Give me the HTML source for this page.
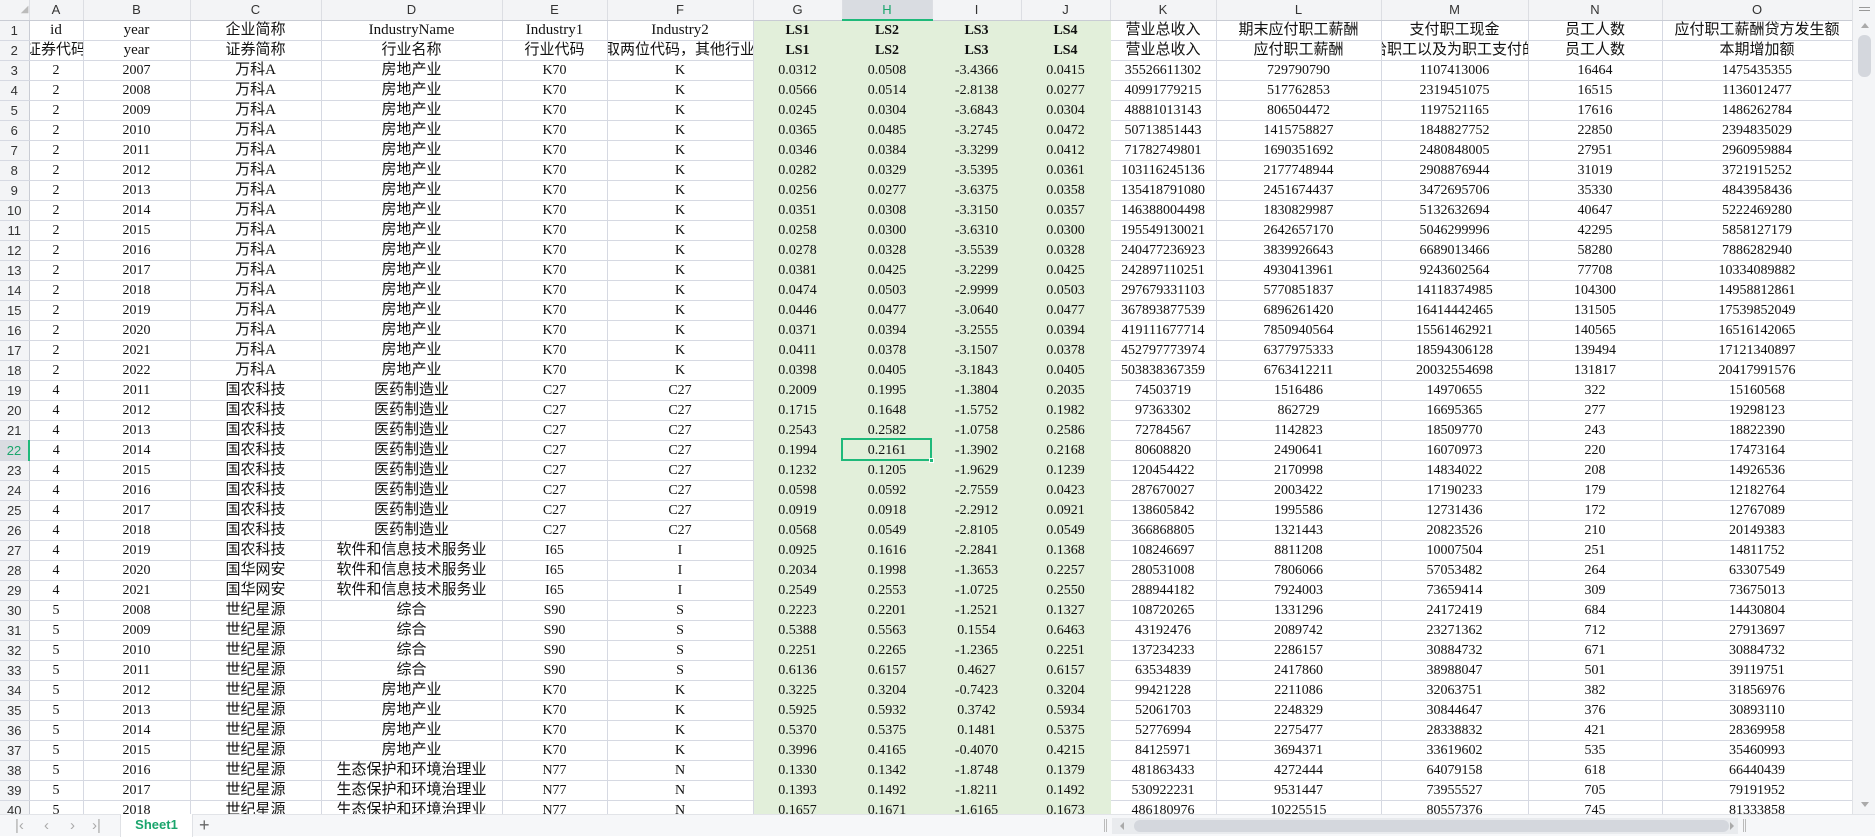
<!DOCTYPE html>
<html><head><meta charset="utf-8"><style>
*{margin:0;padding:0;box-sizing:border-box}
body{width:1875px;height:836px;overflow:hidden;background:#fff;position:relative;font-family:"Liberation Serif","Noto Sans CJK SC",serif;}
#wrap{position:absolute;left:0;top:0;width:1852px;height:814px;overflow:hidden}
table{border-collapse:collapse;table-layout:fixed;width:1852px}
td{height:20px;border-right:1px solid #d6d9e2;border-bottom:1px solid #d6d9e2;text-align:center;white-space:nowrap;overflow:hidden;font-size:14px;color:#111;padding:0;line-height:19px}
tr td:nth-child(4),tr td:nth-child(5),tr.t td{font-size:15px}
tr.h td{background:#f3f4f6;font-family:"Liberation Sans",sans-serif;font-size:13px;color:#333;border-bottom:1px solid #c9ccd4;border-right:1px solid #dcdee3}
td.r{background:#f3f4f6;font-family:"Liberation Sans",sans-serif;font-size:13px !important;color:#333;border-right:1px solid #c9ccd4}
td.g{background:#e2efda;border-right-color:#e2efda;border-bottom-color:#e2efda}
td.b{font-weight:bold;font-size:14px !important}
tr.h td.sel{background:#d9dce1;color:#1aa56c;border-bottom:2px solid #1fb97a}
td.rs{background:#d9dce1;color:#1aa56c;border-right:2px solid #1fb97a}
.c{display:flex;justify-content:center;overflow:hidden;width:100%}
#cur{position:absolute;left:841px;top:438px;width:91px;height:23px;border:2px solid #1fb97a}
#cur i{position:absolute;right:-4px;bottom:-4px;width:5px;height:5px;background:#1fb97a;border:1px solid #fff}
#bar{position:absolute;left:0;top:814px;width:1875px;height:22px;background:#f6f7f9;border-top:1px solid #e2e4e8;font-family:"Liberation Sans",sans-serif}
#vs{position:absolute;left:1852px;top:0;width:23px;height:814px;background:#f4f5f7;border-left:1px solid #e0e2e6}
.nav{position:absolute;top:2px;font-size:15px;color:#aaa}
</style></head><body>
<div id="wrap"><table>
<colgroup><col style="width:29px"><col style="width:54px"><col style="width:107px"><col style="width:131px"><col style="width:181px"><col style="width:105px"><col style="width:146px"><col style="width:89px"><col style="width:90px"><col style="width:89px"><col style="width:89px"><col style="width:106px"><col style="width:165px"><col style="width:147px"><col style="width:134px"><col style="width:190px"></colgroup>
<tr class="h"><td style="color:#bbb;font-size:10px;text-align:right">◢</td><td>A</td><td>B</td><td>C</td><td>D</td><td>E</td><td>F</td><td>G</td><td class="sel">H</td><td>I</td><td>J</td><td>K</td><td>L</td><td>M</td><td>N</td><td>O</td></tr>
<tr class="t"><td class="r">1</td><td>id</td><td>year</td><td>企业简称</td><td>IndustryName</td><td>Industry1</td><td>Industry2</td><td class="g b">LS1</td><td class="g b">LS2</td><td class="g b">LS3</td><td class="g b">LS4</td><td>营业总收入</td><td>期末应付职工薪酬</td><td>支付职工现金</td><td>员工人数</td><td>应付职工薪酬贷方发生额</td></tr>
<tr class="t"><td class="r">2</td><td><div class="c">证券代码</div></td><td>year</td><td>证券简称</td><td>行业名称</td><td>行业代码</td><td><div class="c">取两位代码，其他行业</div></td><td class="g b">LS1</td><td class="g b">LS2</td><td class="g b">LS3</td><td class="g b">LS4</td><td>营业总收入</td><td>应付职工薪酬</td><td><div class="c">支付给职工以及为职工支付的现金</div></td><td>员工人数</td><td>本期增加额</td></tr>
<tr><td class="r">3</td><td>2</td><td>2007</td><td>万科A</td><td>房地产业</td><td>K70</td><td>K</td><td class="g">0.0312</td><td class="g">0.0508</td><td class="g">-3.4366</td><td class="g">0.0415</td><td>35526611302</td><td>729790790</td><td>1107413006</td><td>16464</td><td>1475435355</td></tr>
<tr><td class="r">4</td><td>2</td><td>2008</td><td>万科A</td><td>房地产业</td><td>K70</td><td>K</td><td class="g">0.0566</td><td class="g">0.0514</td><td class="g">-2.8138</td><td class="g">0.0277</td><td>40991779215</td><td>517762853</td><td>2319451075</td><td>16515</td><td>1136012477</td></tr>
<tr><td class="r">5</td><td>2</td><td>2009</td><td>万科A</td><td>房地产业</td><td>K70</td><td>K</td><td class="g">0.0245</td><td class="g">0.0304</td><td class="g">-3.6843</td><td class="g">0.0304</td><td>48881013143</td><td>806504472</td><td>1197521165</td><td>17616</td><td>1486262784</td></tr>
<tr><td class="r">6</td><td>2</td><td>2010</td><td>万科A</td><td>房地产业</td><td>K70</td><td>K</td><td class="g">0.0365</td><td class="g">0.0485</td><td class="g">-3.2745</td><td class="g">0.0472</td><td>50713851443</td><td>1415758827</td><td>1848827752</td><td>22850</td><td>2394835029</td></tr>
<tr><td class="r">7</td><td>2</td><td>2011</td><td>万科A</td><td>房地产业</td><td>K70</td><td>K</td><td class="g">0.0346</td><td class="g">0.0384</td><td class="g">-3.3299</td><td class="g">0.0412</td><td>71782749801</td><td>1690351692</td><td>2480848005</td><td>27951</td><td>2960959884</td></tr>
<tr><td class="r">8</td><td>2</td><td>2012</td><td>万科A</td><td>房地产业</td><td>K70</td><td>K</td><td class="g">0.0282</td><td class="g">0.0329</td><td class="g">-3.5395</td><td class="g">0.0361</td><td>103116245136</td><td>2177748944</td><td>2908876944</td><td>31019</td><td>3721915252</td></tr>
<tr><td class="r">9</td><td>2</td><td>2013</td><td>万科A</td><td>房地产业</td><td>K70</td><td>K</td><td class="g">0.0256</td><td class="g">0.0277</td><td class="g">-3.6375</td><td class="g">0.0358</td><td>135418791080</td><td>2451674437</td><td>3472695706</td><td>35330</td><td>4843958436</td></tr>
<tr><td class="r">10</td><td>2</td><td>2014</td><td>万科A</td><td>房地产业</td><td>K70</td><td>K</td><td class="g">0.0351</td><td class="g">0.0308</td><td class="g">-3.3150</td><td class="g">0.0357</td><td>146388004498</td><td>1830829987</td><td>5132632694</td><td>40647</td><td>5222469280</td></tr>
<tr><td class="r">11</td><td>2</td><td>2015</td><td>万科A</td><td>房地产业</td><td>K70</td><td>K</td><td class="g">0.0258</td><td class="g">0.0300</td><td class="g">-3.6310</td><td class="g">0.0300</td><td>195549130021</td><td>2642657170</td><td>5046299996</td><td>42295</td><td>5858127179</td></tr>
<tr><td class="r">12</td><td>2</td><td>2016</td><td>万科A</td><td>房地产业</td><td>K70</td><td>K</td><td class="g">0.0278</td><td class="g">0.0328</td><td class="g">-3.5539</td><td class="g">0.0328</td><td>240477236923</td><td>3839926643</td><td>6689013466</td><td>58280</td><td>7886282940</td></tr>
<tr><td class="r">13</td><td>2</td><td>2017</td><td>万科A</td><td>房地产业</td><td>K70</td><td>K</td><td class="g">0.0381</td><td class="g">0.0425</td><td class="g">-3.2299</td><td class="g">0.0425</td><td>242897110251</td><td>4930413961</td><td>9243602564</td><td>77708</td><td>10334089882</td></tr>
<tr><td class="r">14</td><td>2</td><td>2018</td><td>万科A</td><td>房地产业</td><td>K70</td><td>K</td><td class="g">0.0474</td><td class="g">0.0503</td><td class="g">-2.9999</td><td class="g">0.0503</td><td>297679331103</td><td>5770851837</td><td>14118374985</td><td>104300</td><td>14958812861</td></tr>
<tr><td class="r">15</td><td>2</td><td>2019</td><td>万科A</td><td>房地产业</td><td>K70</td><td>K</td><td class="g">0.0446</td><td class="g">0.0477</td><td class="g">-3.0640</td><td class="g">0.0477</td><td>367893877539</td><td>6896261420</td><td>16414442465</td><td>131505</td><td>17539852049</td></tr>
<tr><td class="r">16</td><td>2</td><td>2020</td><td>万科A</td><td>房地产业</td><td>K70</td><td>K</td><td class="g">0.0371</td><td class="g">0.0394</td><td class="g">-3.2555</td><td class="g">0.0394</td><td>419111677714</td><td>7850940564</td><td>15561462921</td><td>140565</td><td>16516142065</td></tr>
<tr><td class="r">17</td><td>2</td><td>2021</td><td>万科A</td><td>房地产业</td><td>K70</td><td>K</td><td class="g">0.0411</td><td class="g">0.0378</td><td class="g">-3.1507</td><td class="g">0.0378</td><td>452797773974</td><td>6377975333</td><td>18594306128</td><td>139494</td><td>17121340897</td></tr>
<tr><td class="r">18</td><td>2</td><td>2022</td><td>万科A</td><td>房地产业</td><td>K70</td><td>K</td><td class="g">0.0398</td><td class="g">0.0405</td><td class="g">-3.1843</td><td class="g">0.0405</td><td>503838367359</td><td>6763412211</td><td>20032554698</td><td>131817</td><td>20417991576</td></tr>
<tr><td class="r">19</td><td>4</td><td>2011</td><td>国农科技</td><td>医药制造业</td><td>C27</td><td>C27</td><td class="g">0.2009</td><td class="g">0.1995</td><td class="g">-1.3804</td><td class="g">0.2035</td><td>74503719</td><td>1516486</td><td>14970655</td><td>322</td><td>15160568</td></tr>
<tr><td class="r">20</td><td>4</td><td>2012</td><td>国农科技</td><td>医药制造业</td><td>C27</td><td>C27</td><td class="g">0.1715</td><td class="g">0.1648</td><td class="g">-1.5752</td><td class="g">0.1982</td><td>97363302</td><td>862729</td><td>16695365</td><td>277</td><td>19298123</td></tr>
<tr><td class="r">21</td><td>4</td><td>2013</td><td>国农科技</td><td>医药制造业</td><td>C27</td><td>C27</td><td class="g">0.2543</td><td class="g">0.2582</td><td class="g">-1.0758</td><td class="g">0.2586</td><td>72784567</td><td>1142823</td><td>18509770</td><td>243</td><td>18822390</td></tr>
<tr><td class="r rs">22</td><td>4</td><td>2014</td><td>国农科技</td><td>医药制造业</td><td>C27</td><td>C27</td><td class="g">0.1994</td><td class="g">0.2161</td><td class="g">-1.3902</td><td class="g">0.2168</td><td>80608820</td><td>2490641</td><td>16070973</td><td>220</td><td>17473164</td></tr>
<tr><td class="r">23</td><td>4</td><td>2015</td><td>国农科技</td><td>医药制造业</td><td>C27</td><td>C27</td><td class="g">0.1232</td><td class="g">0.1205</td><td class="g">-1.9629</td><td class="g">0.1239</td><td>120454422</td><td>2170998</td><td>14834022</td><td>208</td><td>14926536</td></tr>
<tr><td class="r">24</td><td>4</td><td>2016</td><td>国农科技</td><td>医药制造业</td><td>C27</td><td>C27</td><td class="g">0.0598</td><td class="g">0.0592</td><td class="g">-2.7559</td><td class="g">0.0423</td><td>287670027</td><td>2003422</td><td>17190233</td><td>179</td><td>12182764</td></tr>
<tr><td class="r">25</td><td>4</td><td>2017</td><td>国农科技</td><td>医药制造业</td><td>C27</td><td>C27</td><td class="g">0.0919</td><td class="g">0.0918</td><td class="g">-2.2912</td><td class="g">0.0921</td><td>138605842</td><td>1995586</td><td>12731436</td><td>172</td><td>12767089</td></tr>
<tr><td class="r">26</td><td>4</td><td>2018</td><td>国农科技</td><td>医药制造业</td><td>C27</td><td>C27</td><td class="g">0.0568</td><td class="g">0.0549</td><td class="g">-2.8105</td><td class="g">0.0549</td><td>366868805</td><td>1321443</td><td>20823526</td><td>210</td><td>20149383</td></tr>
<tr><td class="r">27</td><td>4</td><td>2019</td><td>国农科技</td><td>软件和信息技术服务业</td><td>I65</td><td>I</td><td class="g">0.0925</td><td class="g">0.1616</td><td class="g">-2.2841</td><td class="g">0.1368</td><td>108246697</td><td>8811208</td><td>10007504</td><td>251</td><td>14811752</td></tr>
<tr><td class="r">28</td><td>4</td><td>2020</td><td>国华网安</td><td>软件和信息技术服务业</td><td>I65</td><td>I</td><td class="g">0.2034</td><td class="g">0.1998</td><td class="g">-1.3653</td><td class="g">0.2257</td><td>280531008</td><td>7806066</td><td>57053482</td><td>264</td><td>63307549</td></tr>
<tr><td class="r">29</td><td>4</td><td>2021</td><td>国华网安</td><td>软件和信息技术服务业</td><td>I65</td><td>I</td><td class="g">0.2549</td><td class="g">0.2553</td><td class="g">-1.0725</td><td class="g">0.2550</td><td>288944182</td><td>7924003</td><td>73659414</td><td>309</td><td>73675013</td></tr>
<tr><td class="r">30</td><td>5</td><td>2008</td><td>世纪星源</td><td>综合</td><td>S90</td><td>S</td><td class="g">0.2223</td><td class="g">0.2201</td><td class="g">-1.2521</td><td class="g">0.1327</td><td>108720265</td><td>1331296</td><td>24172419</td><td>684</td><td>14430804</td></tr>
<tr><td class="r">31</td><td>5</td><td>2009</td><td>世纪星源</td><td>综合</td><td>S90</td><td>S</td><td class="g">0.5388</td><td class="g">0.5563</td><td class="g">0.1554</td><td class="g">0.6463</td><td>43192476</td><td>2089742</td><td>23271362</td><td>712</td><td>27913697</td></tr>
<tr><td class="r">32</td><td>5</td><td>2010</td><td>世纪星源</td><td>综合</td><td>S90</td><td>S</td><td class="g">0.2251</td><td class="g">0.2265</td><td class="g">-1.2365</td><td class="g">0.2251</td><td>137234233</td><td>2286157</td><td>30884732</td><td>671</td><td>30884732</td></tr>
<tr><td class="r">33</td><td>5</td><td>2011</td><td>世纪星源</td><td>综合</td><td>S90</td><td>S</td><td class="g">0.6136</td><td class="g">0.6157</td><td class="g">0.4627</td><td class="g">0.6157</td><td>63534839</td><td>2417860</td><td>38988047</td><td>501</td><td>39119751</td></tr>
<tr><td class="r">34</td><td>5</td><td>2012</td><td>世纪星源</td><td>房地产业</td><td>K70</td><td>K</td><td class="g">0.3225</td><td class="g">0.3204</td><td class="g">-0.7423</td><td class="g">0.3204</td><td>99421228</td><td>2211086</td><td>32063751</td><td>382</td><td>31856976</td></tr>
<tr><td class="r">35</td><td>5</td><td>2013</td><td>世纪星源</td><td>房地产业</td><td>K70</td><td>K</td><td class="g">0.5925</td><td class="g">0.5932</td><td class="g">0.3742</td><td class="g">0.5934</td><td>52061703</td><td>2248329</td><td>30844647</td><td>376</td><td>30893110</td></tr>
<tr><td class="r">36</td><td>5</td><td>2014</td><td>世纪星源</td><td>房地产业</td><td>K70</td><td>K</td><td class="g">0.5370</td><td class="g">0.5375</td><td class="g">0.1481</td><td class="g">0.5375</td><td>52776994</td><td>2275477</td><td>28338832</td><td>421</td><td>28369958</td></tr>
<tr><td class="r">37</td><td>5</td><td>2015</td><td>世纪星源</td><td>房地产业</td><td>K70</td><td>K</td><td class="g">0.3996</td><td class="g">0.4165</td><td class="g">-0.4070</td><td class="g">0.4215</td><td>84125971</td><td>3694371</td><td>33619602</td><td>535</td><td>35460993</td></tr>
<tr><td class="r">38</td><td>5</td><td>2016</td><td>世纪星源</td><td>生态保护和环境治理业</td><td>N77</td><td>N</td><td class="g">0.1330</td><td class="g">0.1342</td><td class="g">-1.8748</td><td class="g">0.1379</td><td>481863433</td><td>4272444</td><td>64079158</td><td>618</td><td>66440439</td></tr>
<tr><td class="r">39</td><td>5</td><td>2017</td><td>世纪星源</td><td>生态保护和环境治理业</td><td>N77</td><td>N</td><td class="g">0.1393</td><td class="g">0.1492</td><td class="g">-1.8211</td><td class="g">0.1492</td><td>530922231</td><td>9531447</td><td>73955527</td><td>705</td><td>79191952</td></tr>
<tr><td class="r">40</td><td>5</td><td>2018</td><td>世纪星源</td><td>生态保护和环境治理业</td><td>N77</td><td>N</td><td class="g">0.1657</td><td class="g">0.1671</td><td class="g">-1.6165</td><td class="g">0.1673</td><td>486180976</td><td>10225515</td><td>80557376</td><td>745</td><td>81333858</td></tr>
</table>
<div id="cur"><i></i></div>
</div>
<div id="vs">
<div style="position:absolute;left:6px;top:7px;width:11px;height:1px;background:#999"></div>
<div style="position:absolute;left:6px;top:10px;width:11px;height:1px;background:#999"></div>
<div style="position:absolute;left:8px;top:23px;width:0;height:0;border-left:4px solid transparent;border-right:4px solid transparent;border-bottom:5px solid #aaa"></div>
<div style="position:absolute;left:5px;top:35px;width:13px;height:42px;background:#d4d7dd;border-radius:6px"></div>
<div style="position:absolute;left:8px;top:802px;width:0;height:0;border-left:4px solid transparent;border-right:4px solid transparent;border-top:5px solid #aaa"></div>
</div>
<div id="bar">
<div class="nav" style="left:15px">|‹</div>
<div class="nav" style="left:44px">‹</div>
<div class="nav" style="left:70px">›</div>
<div class="nav" style="left:92px">›|</div>
<div style="position:absolute;left:120px;top:-1px;width:73px;height:23px;background:#fff;border-left:1px solid #e0e2e6;border-right:1px solid #e0e2e6;color:#1aa56c;font-weight:bold;font-size:13px;text-align:center;line-height:22px">Sheet1</div>
<div style="position:absolute;left:199px;top:0px;font-size:18px;color:#666;line-height:20px">+</div>
<div style="position:absolute;left:1104px;top:4px;width:3px;height:13px;border-left:1px solid #bbb;border-right:1px solid #bbb"></div>
<div style="position:absolute;left:1112px;top:3px;width:626px;height:16px;background:#e9ebee"></div>
<div style="position:absolute;left:1120px;top:7px;width:0;height:0;border-top:4px solid transparent;border-bottom:4px solid transparent;border-right:4px solid #aaa"></div>
<div style="position:absolute;left:1134px;top:5px;width:595px;height:12px;background:#d4d7dd;border-radius:6px"></div>
<div style="position:absolute;left:1730px;top:7px;width:0;height:0;border-top:4px solid transparent;border-bottom:4px solid transparent;border-left:4px solid #aaa"></div>
<div style="position:absolute;left:1743px;top:4px;width:3px;height:13px;border-left:1px solid #bbb;border-right:1px solid #bbb"></div>
</div>
</body></html>
